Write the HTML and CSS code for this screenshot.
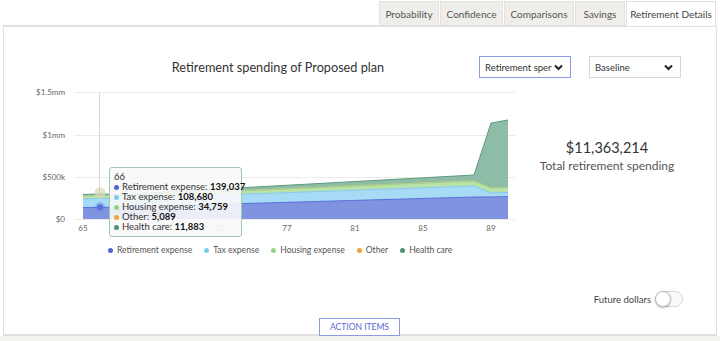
FILE: index.html
```html
<!DOCTYPE html>
<html>
<head>
<meta charset="utf-8">
<link rel="stylesheet" href="styles.css">
</head>
<body>
<div class="tabs">
  <div class="tab">Probability</div>
  <div class="tab">Confidence</div>
  <div class="tab">Comparisons</div>
  <div class="tab">Savings</div>
  <div class="tab active">Retirement Details</div>
</div>
<div class="panel">
  <div class="head">
    <div class="title">Retirement spending of Proposed plan</div>
    <div class="sel sel-active"><span>Retirement sper</span><svg class="chev" width="9" height="7" viewBox="0 0 9 7"><path d="M1 1.5 L4.5 5 L8 1.5" fill="none" stroke="#222" stroke-width="2"/></svg></div>
    <div class="sel"><span>Baseline</span><svg class="chev" width="9" height="7" viewBox="0 0 9 7"><path d="M1 1.5 L4.5 5 L8 1.5" fill="none" stroke="#222" stroke-width="2"/></svg></div>
  </div>
  <div class="body">
    <div class="chart">
      <svg width="516" height="150" viewBox="0 0 516 150">
        <g transform="translate(-4,-84)">
          <g class="grid">
            <line x1="74" y1="92.5" x2="515" y2="92.5"/>
            <line x1="74" y1="135.5" x2="515" y2="135.5"/>
            <line x1="74" y1="177.5" x2="515" y2="177.5"/>
            <line x1="74" y1="219.5" x2="515" y2="219.5"/>
          </g>
          <g class="ylab">
            <text x="65" y="95">$1.5mm</text>
            <text x="65" y="138">$1mm</text>
            <text x="65" y="180">$500k</text>
            <text x="65" y="222">$0</text>
          </g>
          <g class="xlab">
            <text x="83" y="231">65</text>
            <text x="219" y="231">73</text>
            <text x="287" y="231">77</text>
            <text x="355" y="231">81</text>
            <text x="423" y="231">85</text>
            <text x="491" y="231">89</text>
          </g>
          <line x1="99.5" y1="92" x2="99.5" y2="219" stroke="#d8d8d8" stroke-width="1"/>
          <polygon fill="#8dbda7" points="83,219 83,194.5 100,193.9 117,194.6 474,175 491,123 508,120 508,219"/>
          <polyline fill="none" stroke="#5f9a80" stroke-width="1" points="83,194.5 100,193.9 117,194.6 474,175 491,123 508,120"/>
          <polygon fill="#f0b873" points="83,219 83,195.5 100,194.9 117,195.4 474,180.3 491,187.5 508,187 508,219"/>
          <polygon fill="#b9e2a9" points="83,219 83,196 100,195.3 117,195.9 474,181 491,188 508,187.5 508,219"/>
          <polyline fill="none" stroke="#9bd28b" stroke-width="1" points="83,196 100,195.3 117,195.9 474,181 491,188 508,187.5"/>
          <polygon fill="#a6daf5" points="83,219 83,199 100,198.2 117,198.7 474,186 491,193 508,192.5 508,219"/>
          <polyline fill="none" stroke="#88c9ef" stroke-width="1" points="83,199 100,198.2 117,198.7 474,186 491,193 508,192.5"/>
          <polygon fill="#7f93e1" points="83,219 83,207.5 100,207.3 117,207.2 474,197 491,197 508,196.5 508,219"/>
          <polyline fill="none" stroke="#5b70d8" stroke-width="1" points="83,207.5 100,207.3 117,207.2 474,197 491,197 508,196.5"/>
          <circle cx="100" cy="193" r="5.5" fill="#d8d8b8" fill-opacity="0.7"/>
          <circle cx="100" cy="207" r="5" fill="#5b70d8" fill-opacity="0.3"/>
          <circle cx="100" cy="207" r="3" fill="#5b70d8"/>
        </g>
      </svg>
      <div class="tooltip">
        <div class="tt-h">66</div>
        <div class="tt-row"><span class="dot d1"></span>Retirement expense: <b>139,037</b></div>
        <div class="tt-row"><span class="dot d2"></span>Tax expense: <b>108,680</b></div>
        <div class="tt-row"><span class="dot d3"></span>Housing expense: <b>34,759</b></div>
        <div class="tt-row"><span class="dot d4"></span>Other: <b>5,089</b></div>
        <div class="tt-row"><span class="dot d5"></span>Health care: <b>11,883</b></div>
      </div>
    </div>
    <div class="summary">
      <div class="amount">$11,363,214</div>
      <div class="caption">Total retirement spending</div>
    </div>
  </div>
  <div class="legend">
    <div class="item"><span class="dot d1"></span>Retirement expense</div>
    <div class="item"><span class="dot d2"></span>Tax expense</div>
    <div class="item"><span class="dot d3"></span>Housing expense</div>
    <div class="item"><span class="dot d4"></span>Other</div>
    <div class="item"><span class="dot d5"></span>Health care</div>
  </div>
  <div class="toggle-row">
    <span class="toggle-label">Future dollars</span>
    <span class="toggle"><span class="knob"></span></span>
  </div>
  <div class="actions">
    <div class="btn">ACTION ITEMS</div>
  </div>
</div>
<div class="strip"></div>
</body>
</html>
```
FILE: styles.css
```css
* { box-sizing: border-box; }
html, body { margin: 0; padding: 0; }
body {
  width: 720px;
  height: 341px;
  overflow: hidden;
  background: #fff;
  font-family: Lato, "Open Sans", sans-serif;
  color: #333;
}
.tabs {
  display: flex;
  justify-content: flex-end;
  padding-top: 1px;
  padding-right: 4px;
  height: 25px;
}
.tab {
  height: 24px;
  background: #efeeeb;
  border: 1px solid #e2e1dd;
  border-bottom: none;
  margin-left: 1px;
  font-size: 10px;
  color: #555;
  display: flex;
  align-items: center;
  justify-content: center;
}
.tab:nth-child(1) { width: 60px; }
.tab:nth-child(2) { width: 63px; }
.tab:nth-child(3) { width: 70px; }
.tab:nth-child(4) { width: 50px; }
.tab.active { width: 90px; background: #fff; height: 25px; margin-bottom: -1px; position: relative; z-index: 1; color: #444; }
.panel {
  margin: 0 3px;
  height: 311px;
  border: 1px solid #e2e1dd;
  border-top-width: 2px;
  border-bottom-width: 2px;
  position: relative;
}
.head {
  display: flex;
  align-items: center;
  height: 22px;
  margin-top: 29px;
  padding-left: 74px;
}
.title {
  width: 400px;
  text-align: center;
  font-size: 12.7px;
  color: #333;
}
.sel {
  width: 92px;
  height: 22px;
  border: 1px solid #d8d8d8;
  display: flex;
  align-items: center;
  justify-content: space-between;
  padding: 0 7px 0 5px;
  font-size: 9.5px;
  color: #333;
  margin-left: 18px;
}
.sel-active { border-color: #8b9ce6; margin-left: 1px; }
.chev { flex: none; }
.body {
  display: flex;
  margin-top: 6px;
}
.chart {
  width: 516px;
  height: 150px;
  position: relative;
}
.chart svg { display: block; }
.grid line { stroke: #ececec; stroke-width: 1; }
.ylab text { font-size: 8px; fill: #666; text-anchor: end; font-family: Lato, sans-serif; }
.xlab text { font-size: 8px; fill: #666; text-anchor: middle; font-family: Lato, sans-serif; }
.tooltip {
  position: absolute;
  left: 105px;
  top: 83px;
  width: 133px;
  height: 70px;
  border: 1px solid #a3c7b5;
  border-radius: 3px;
  background: rgba(248, 248, 248, 0.9);
  padding: 4px 0 0 4px;
  font-size: 9.5px;
  line-height: 10px;
  color: #333;
}
.tt-row { display: flex; align-items: center; white-space: pre; }
.tt-row b { font-weight: 700; color: #111; }
.dot {
  width: 5px;
  height: 5px;
  border-radius: 50%;
  display: inline-block;
  margin-right: 3px;
  flex: none;
}
.d1 { background: #4e63d4; }
.d2 { background: #7fcaf1; }
.d3 { background: #92d68c; }
.d4 { background: #f0a23a; }
.d5 { background: #4f9274; }
.summary {
  width: 180px;
  padding-top: 55px;
  margin-left: -3px;
  text-align: center;
}
.amount { font-size: 14.5px; color: #333; line-height: 18px; }
.caption { font-size: 12px; color: #555; line-height: 16px; margin-top: 1px; }
.legend {
  display: flex;
  align-items: center;
  height: 14px;
  margin-top: 9px;
  padding-left: 104px;
  font-size: 8.6px;
  color: #555;
}
.legend .item { display: flex; align-items: center; margin-right: 12px; }
.legend .dot { margin-right: 4px; }
.toggle-row {
  display: flex;
  justify-content: flex-end;
  align-items: center;
  height: 16px;
  margin-top: 34px;
  padding-right: 33px;
}
.toggle-label { font-size: 9.5px; color: #444; margin-right: 4px; }
.toggle {
  width: 28px;
  height: 16px;
  border: 1px solid #d4d4d4;
  border-radius: 8px;
  background: #fafafa;
  position: relative;
}
.knob {
  position: absolute;
  left: -1px;
  top: -1px;
  width: 16px;
  height: 16px;
  border-radius: 50%;
  background: #fff;
  border: 1px solid #bdbdbd;
  box-shadow: 0 1px 2px rgba(0,0,0,0.25);
}
.actions {
  display: flex;
  padding-left: 315px;
  margin-top: 11px;
}
.btn {
  width: 81px;
  height: 18px;
  border: 1px solid #8b9ce6;
  background: #fff;
  color: #5568d4;
  font-size: 8.5px;
  display: flex;
  align-items: center;
  justify-content: center;
  position: relative;
  z-index: 1;
}
.strip {
  height: 5px;
  background: #f3f2ee;
}
```
